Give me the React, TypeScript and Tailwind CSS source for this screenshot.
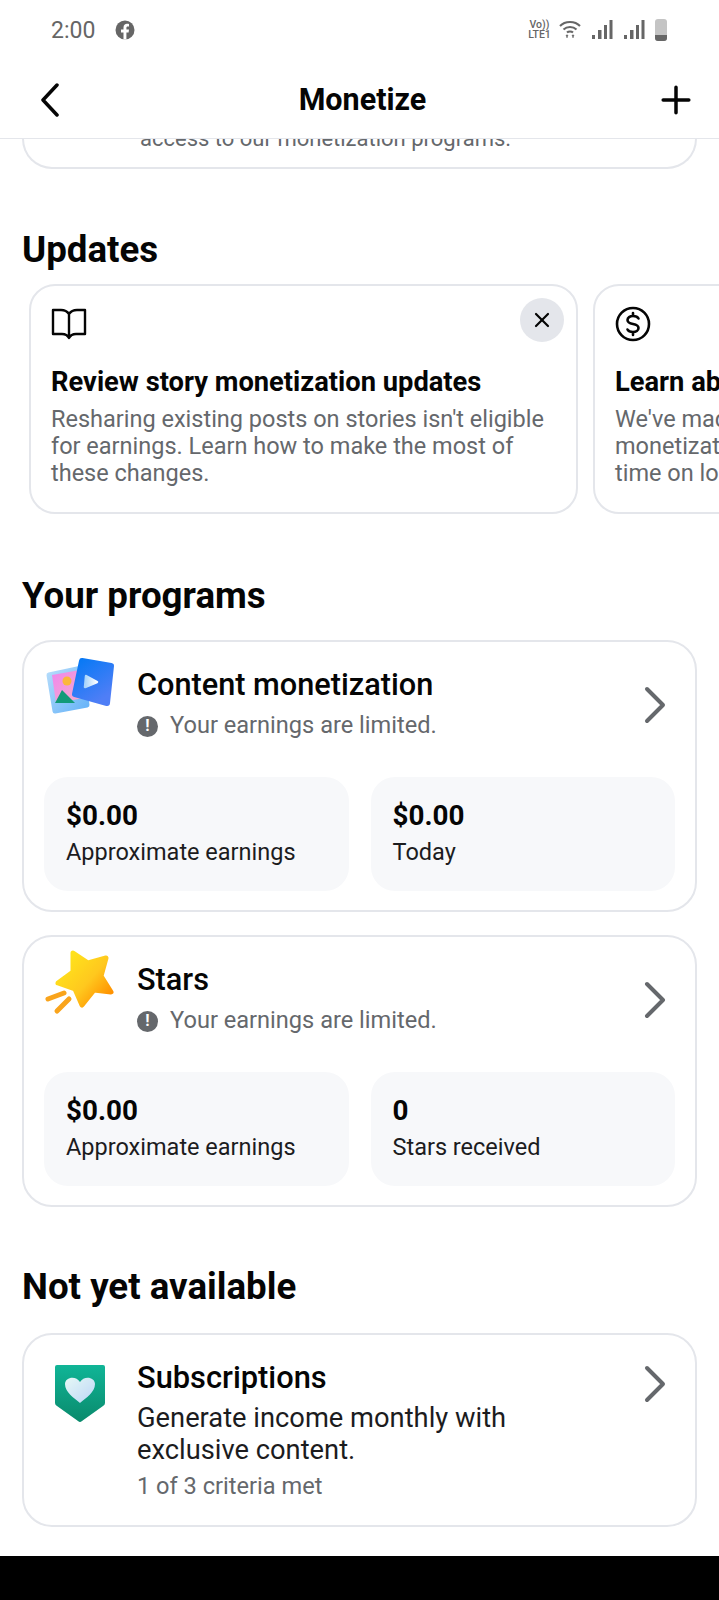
import React from "react";
import { X } from "lucide-react";

const font = { fontFamily: "Roboto, 'Noto Sans', sans-serif" };

const StatBox = ({ value, label }: { value: string; label: string }) => (
  <div className="flex h-[114px] flex-col justify-center rounded-[24px] bg-[#f7f8fa] px-[22px]">
    <div className="text-[27.8px] font-bold leading-[36px] text-[#050505]">{value}</div>
    <div className="text-[23.5px] leading-[36px] text-[#1c1c1e]">{label}</div>
  </div>
);

const Chevron = () => (
  <svg width="22" height="38" viewBox="0 0 22 38" fill="none" stroke="#65686c" strokeWidth="4" strokeLinecap="round" strokeLinejoin="round">
    <path d="M3 3 L19 19 L3 35" />
  </svg>
);

const MediaIcon = () => (
  <svg width="72" height="60" viewBox="0 0 72 60">
    <defs>
      <linearGradient id="mediaBack" x1="0" y1="0" x2="1" y2="1">
        <stop offset="0" stopColor="#b5dcfb" />
        <stop offset="1" stopColor="#66b3f8" />
      </linearGradient>
      <linearGradient id="mediaFront" x1="0" y1="0" x2="0.6" y2="1">
        <stop offset="0" stopColor="#0579f5" />
        <stop offset="1" stopColor="#4f7ef6" />
      </linearGradient>
      <linearGradient id="mediaPink" x1="0" y1="0" x2="1" y2="1">
        <stop offset="0" stopColor="#ee86ee" />
        <stop offset="1" stopColor="#f7aec8" />
      </linearGradient>
      <linearGradient id="mediaPlay" x1="0" y1="0" x2="1" y2="0">
        <stop offset="0" stopColor="#a8d4fb" />
        <stop offset="1" stopColor="#ffffff" />
      </linearGradient>
    </defs>
    <path d="M5 19 L38 12 L43 49 L11 55 Z" fill="url(#mediaBack)" stroke="url(#mediaBack)" strokeWidth="5" strokeLinejoin="round" />
    <path d="M8 19 L36 14 L40 42 L12 47 Z" fill="url(#mediaPink)" />
    <circle cx="23" cy="25" r="4.500" fill="#fbb73a" />
    <path d="M11 47 L18 34 L31 47 Z" fill="#129a78" strokeLinejoin="round" />
    <path d="M38 5 L67 10 L63 47 L31 38 Z" fill="url(#mediaFront)" stroke="url(#mediaFront)" strokeWidth="6" strokeLinejoin="round" />
    <path d="M42 20 L53 26 L41 31 Z" fill="url(#mediaPlay)" stroke="url(#mediaPlay)" strokeWidth="2.500" strokeLinejoin="round" />
  </svg>
);

const StarIcon = () => (
  <svg className="-mt-[2px]" width="72" height="66" viewBox="0 0 72 66">
    <defs>
      <linearGradient id="starFill" x1="0.1" y1="0.2" x2="0.9" y2="0.9">
        <stop offset="0" stopColor="#ffe21c" />
        <stop offset="0.55" stopColor="#ffc81e" />
        <stop offset="1" stopColor="#ff9100" />
      </linearGradient>
    </defs>
    <path
      d="M29 4 L44 14 L62 9 L57 27 L67 43 L50 41 L38 56 L31 40 L14 34 L29 23 Z"
      fill="url(#starFill)"
      stroke="url(#starFill)"
      strokeWidth="5"
      strokeLinejoin="round"
    />
    <path d="M4 50 L20 44" stroke="#f9a41c" strokeWidth="5" strokeLinecap="round" />
    <path d="M13 62 L25 50" stroke="#f9a41c" strokeWidth="5" strokeLinecap="round" />
  </svg>
);

const ShieldIcon = () => (
  <svg width="52" height="58" viewBox="0 0 52 58">
    <defs>
      <linearGradient id="shieldFill" x1="0" y1="0" x2="0" y2="1">
        <stop offset="0" stopColor="#10b597" />
        <stop offset="1" stopColor="#0a8a6c" />
      </linearGradient>
      <linearGradient id="heartFill" x1="0" y1="0" x2="1" y2="1">
        <stop offset="0" stopColor="#e6f8f6" />
        <stop offset="1" stopColor="#bcd6f6" />
      </linearGradient>
    </defs>
    <path
      d="M3 0 H49 Q51 0 51 2 V38 Q51 40 49 41 L28 56 Q26 58 24 56 L3 41 Q1 40 1 38 V2 Q1 0 3 0 Z"
      fill="url(#shieldFill)"
    />
    <path
      d="M26 38 C20 33 11 27 11 19 C11 12 22 10 26 17 C30 10 41 12 41 19 C41 27 32 33 26 38 Z"
      fill="url(#heartFill)"
    />
  </svg>
);

const Limited = () => (
  <div className="mt-[7px] flex h-[32px] items-center gap-[12px] text-[23.6px] text-[#65686c]">
    <span className="flex h-[21px] w-[21px] items-center justify-center rounded-full bg-[#65686c] text-[16px] font-bold text-white">!</span>
    <span>Your earnings are limited.</span>
  </div>
);

const ProgramCard = ({
  icon,
  title,
  stats,
}: {
  icon: React.ReactNode;
  title: string;
  stats: { value: string; label: string }[];
}) => (
  <div className="mx-[22px] h-[272px] rounded-[30px] border-2 border-[#e4e6eb] px-[20px] pt-[14px]">
    <div className="flex h-[121px]">
      <div className="w-[93px] shrink-0">{icon}</div>
      <div className="flex-1 pt-[11px]">
        <div className="text-[30.7px] font-medium leading-[36px] text-[#050505]">{title}</div>
        <Limited />
      </div>
      <div className="mr-[9px] mt-[30px]">
        <Chevron />
      </div>
    </div>
    <div className="grid grid-cols-2 gap-[22px]">
      {stats.map((s) => (
        <StatBox key={s.label} value={s.value} label={s.label} />
      ))}
    </div>
  </div>
);

const SectionTitle = ({ children }: { children: React.ReactNode }) => (
  <h2 className="mx-[22px] text-[36.7px] font-bold leading-[44px] text-[#050505]">{children}</h2>
);

const Bars = () => (
  <svg className="ml-[11px]" width="21" height="20" viewBox="0 0 21 20" fill="#666">
    <rect x="0" y="15" width="3" height="4" />
    <rect x="6" y="10" width="3.500" height="9" />
    <rect x="12" y="5" width="3" height="14" />
    <rect x="17.500" y="0" width="3" height="19" />
  </svg>
);

const StatusBar = () => (
  <div className="flex h-[60px] items-center justify-between pl-[51px] pr-[52px] text-[#666]">
    <div className="flex items-center gap-[20px]">
      <span className="text-[23px] leading-none">2:00</span>
      <svg width="20" height="20" viewBox="0 0 20 20">
        <circle cx="10" cy="10" r="9.500" fill="#666" />
        <path d="M8.500 19.500 V12.500 H6 V9.500 H8.500 V7.500 C8.500 5 10 3.800 12 3.800 C13 3.800 14 4 14 4 V6.500 H12.800 C11.600 6.500 11.400 7.200 11.400 8 V9.500 H14 L13.600 12.500 H11.400 V19.500 Z" fill="#fff" />
      </svg>
    </div>
    <div className="flex items-center">
      <div className="mr-[7px] flex w-[25px] flex-col items-center text-[10.5px] font-medium leading-[10px]">
        <span>Vo))</span>
        <span>LTE1</span>
      </div>
      <svg width="22" height="20" viewBox="0 0 22 20" fill="none" stroke="#666" strokeWidth="2">
        <path d="M1 6 C6 0.500 16 0.500 21 6" />
        <path d="M4.500 9.500 C8 6 14 6 17.500 9.500" />
        <path d="M8 12.500 C9.500 11 12.500 11 14 12.500" />
        <path d="M7 15 L9 15 L8 18 Z M13 15 L15 15 L14 18 Z" fill="#666" strokeWidth="0.500" />
      </svg>
      <Bars />
      <Bars />
      <div className="relative ml-[10px] h-[22px] w-[12px] overflow-hidden rounded-[3px] bg-[#c4c4c4]">
        <div className="absolute inset-x-0 bottom-0 h-[6px] bg-[#666]" />
      </div>
    </div>
  </div>
);

export default function App() {
  return (
    <div className="flex h-[1600px] w-[719px] flex-col overflow-hidden bg-black" style={font}>
      <div className="flex h-[1556px] flex-col overflow-hidden bg-white">
        <header className="h-[139px] shrink-0 border-b border-[#e4e6eb]">
          <StatusBar />
          <div className="flex h-[78px] items-center justify-between pl-[41px] pr-[21px] pt-[2px]">
            <svg width="18" height="34" viewBox="0 0 18 34" fill="none" stroke="#050505" strokeWidth="3.500" strokeLinecap="round" strokeLinejoin="round">
              <path d="M16 2 L2 17 L16 32" />
            </svg>
            <h1 className="ml-[12px] text-[30.5px] font-bold text-[#050505]">Monetize</h1>
            <svg width="44" height="44" viewBox="0 0 24 24" fill="none" stroke="#050505" strokeWidth="1.900" strokeLinecap="round">
              <path d="M5 12 H19 M12 5 V19" />
            </svg>
          </div>
        </header>

        <div className="mx-[22px] h-[30px] shrink-0 overflow-hidden rounded-b-[30px] border-x-2 border-b-2 border-[#e4e6eb] pl-[116px]">
          <p className="-mt-[16px] text-[22px] leading-[32px] text-[#65686c]">access to our monetization programs.</p>
        </div>

        <div className="mt-[59px]">
          <SectionTitle>Updates</SectionTitle>
        </div>

        <div className="mt-[12px] flex gap-[15px] overflow-hidden pl-[29px]">
          <div className="relative h-[230px] w-[549px] shrink-0 rounded-[26px] border-2 border-[#e4e6eb] px-[20px] pt-[22px]">
            <svg width="36" height="32" viewBox="0 0 36 32" fill="none" stroke="#050505" strokeWidth="2.400" strokeLinejoin="round">
              <path d="M18 6 C16 3 13 2 10 2 H2 V26 H11 C14 26 16.500 27 18 30 C19.500 27 22 26 25 26 H34 V2 H26 C23 2 20 3 18 6 Z M18 6 V30" />
            </svg>
            <button className="absolute right-[12px] top-[12px] flex h-[44px] w-[44px] items-center justify-center rounded-full bg-[#e4e6eb]">
              <X className="h-[24px] w-[24px] text-[#050505]" strokeWidth={2.2} />
            </button>
            <h3 className="mt-[24px] text-[27.3px] font-bold leading-[36px] text-[#050505]">Review story monetization updates</h3>
            <p className="mt-[6px] text-[23.5px] leading-[27px] text-[#65686c]">
              Resharing existing posts on stories isn't eligible for earnings. Learn how to make the most of these changes.
            </p>
          </div>
          <div className="h-[230px] w-[549px] shrink-0 rounded-[26px] border-2 border-[#e4e6eb] px-[20px] pt-[19px]">
            <svg className="-ml-[1px]" width="38" height="38" viewBox="0 0 38 38" fill="none" stroke="#050505" strokeWidth="2.600" strokeLinecap="round" strokeLinejoin="round">
              <circle cx="19" cy="19" r="16" />
              <path d="M24.500 13.500 C23.500 11.500 21.500 11 19 11 C16 11 13.500 12.500 13.500 15 C13.500 21 24.500 17 24.500 23 C24.500 25.500 22 27 19 27 C16.500 27 14.500 26.500 13.500 24.500 M19 8 V11 M19 27 V30" />
            </svg>
            <h3 className="mt-[21px] text-[27.3px] font-bold leading-[36px] text-[#050505]">Learn about monetization</h3>
            <p className="mt-[6px] text-[23.5px] leading-[27px] text-[#65686c]">
              We've made changes to our
              <br />
              monetization programs to reward
              <br />
              time on long videos.
            </p>
          </div>
        </div>

        <div className="mt-[60px]">
          <SectionTitle>Your programs</SectionTitle>
        </div>

        <div className="mt-[22px] flex flex-col gap-[23px]">
          <ProgramCard
            icon={<MediaIcon />}
            title="Content monetization"
            stats={[
              { value: "$0.00", label: "Approximate earnings" },
              { value: "$0.00", label: "Today" },
            ]}
          />
          <ProgramCard
            icon={<StarIcon />}
            title="Stars"
            stats={[
              { value: "$0.00", label: "Approximate earnings" },
              { value: "0", label: "Stars received" },
            ]}
          />
        </div>

        <div className="mt-[58px]">
          <SectionTitle>Not yet available</SectionTitle>
        </div>

        <div className="mx-[22px] mt-[24px] flex h-[194px] rounded-[30px] border-2 border-[#e4e6eb] pl-[30px] pr-[29px] pt-[25px]">
          <div className="w-[83px] shrink-0 pt-[5px]">
            <ShieldIcon />
          </div>
          <div className="flex-1">
            <div className="text-[30.8px] font-medium leading-[36px] text-[#050505]">Subscriptions</div>
            <div className="mt-[6px] text-[27.3px] leading-[32px] text-[#1c1c1e]">
              Generate income monthly with
              <br />
              exclusive content.
            </div>
            <div className="mt-[4px] text-[23.6px] leading-[32px] text-[#65686c]">1 of 3 criteria met</div>
          </div>
          <div className="mt-[5px]">
            <Chevron />
          </div>
        </div>
      </div>
    </div>
  );
}
